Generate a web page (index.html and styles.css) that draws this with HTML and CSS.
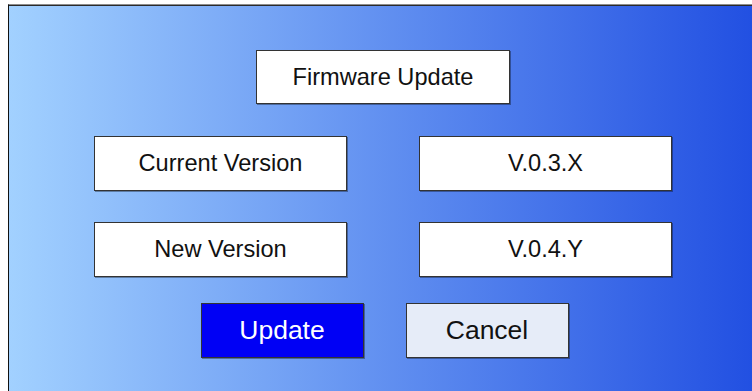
FILE: index.html
```html
<!DOCTYPE html>
<html>
<head>
  <meta charset="UTF-8">
  <title>Firmware Update</title>
  <link rel="stylesheet" href="styles.css">
</head>
<body>

<div class="frame">

  <div class="title">Firmware Update</div>

  <div class="row">
    <div class="field">Current Version</div>
    <div class="field">V.0.3.X</div>
  </div>

  <div class="row">
    <div class="field">New Version</div>
    <div class="field">V.0.4.Y</div>
  </div>

  <div class="actions">
    <button class="btn btn-update">Update</button>
    <button class="btn btn-cancel">Cancel</button>
  </div>

</div>

</body>
</html>
```

FILE: styles.css
```css
body {
  font-family: "Liberation Sans", Arial, sans-serif;
  margin: 0;
  padding: 4px 0 0 8px;
  background-color: #fff;
  overflow: hidden;
}
.frame {
  height: 387px;
  box-sizing: border-box;
  border-top: 1px solid #8c8c8c;
  border-left: 1px solid #111;
  box-shadow: inset 0 1px 0 #2a2a2a;
  background: linear-gradient(to right, #a2d1ff, #2250e2);
  display: flex;
  flex-direction: column;
  align-items: center;
  padding: 45px 0 0 5px;
}
.title,
.field,
.btn {
  box-sizing: border-box;
  border: 1px solid #333;
  box-shadow: 1px 1px 0 rgba(0, 0, 0, 0.35);
  background-color: #fff;
  color: #111;
  display: flex;
  align-items: center;
  justify-content: center;
}
.title {
  width: 254px;
  height: 54px;
  font-size: 23.6px;
}
.row {
  display: flex;
  gap: 72px;
  margin-top: 32px;
}
.row + .row {
  margin-top: 31px;
}
.field {
  width: 253px;
  height: 55px;
  font-size: 23.6px;
}
.actions {
  display: flex;
  gap: 42px;
  margin-top: 26px;
  padding-left: 3px;
}
.btn {
  width: 163px;
  height: 55px;
  font-family: inherit;
  font-size: 26.5px;
  padding: 0;
}
.btn-update {
  background-color: #0000f5;
  color: #fff;
}
.btn-cancel {
  background-color: #e6ecf8;
  color: #111;
}
```
